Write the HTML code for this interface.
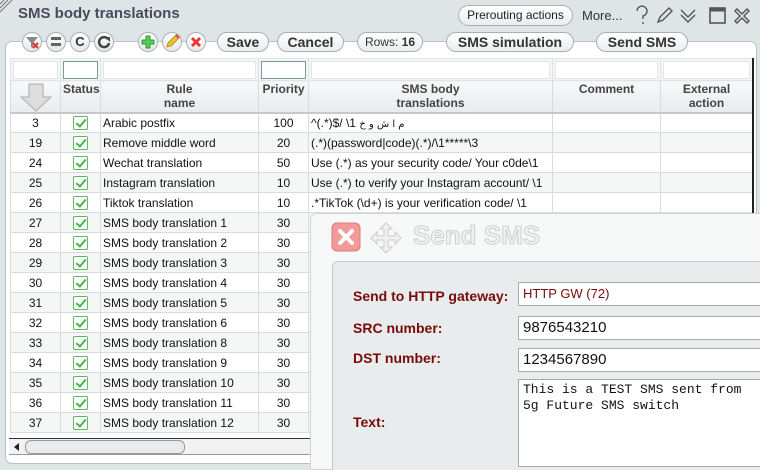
<!DOCTYPE html>
<html><head><meta charset="utf-8">
<style>
*{box-sizing:border-box;margin:0;padding:0}
html{width:760px;height:470px;overflow:hidden}
body{width:760px;height:470px;overflow:hidden;background:#dfe5e7;font-family:"Liberation Sans",Arial,sans-serif;position:relative}
.abs{position:absolute}
.title{left:18px;top:5px;font-size:15px;font-weight:bold;color:#4a4a5a}
.panel{left:5px;top:41px;width:752px;height:423px;background:#fff;border:1px solid #b8c0c4;border-radius:7px 7px 7px 7px}
.btn{position:absolute;border:1px solid #a9b0b4;border-radius:11px;background:linear-gradient(#fff,#e9eef0);font-weight:bold;color:#333;text-align:center}
.rb{position:absolute;width:20px;height:20px;border:1px solid #a9b0b4;border-radius:50%;background:linear-gradient(#fff,#e4e9eb);font-weight:bold;font-size:13px;text-align:center;line-height:18px;color:#333}
table{border-collapse:collapse;position:absolute;left:10px;top:58px;width:742px;font-size:12px;table-layout:fixed}
td{border:1px solid #d8dcdd;height:20px;padding:0 2px;white-space:nowrap;overflow:hidden;color:#111}
tr.f td{height:22px;background:#f3f5f6;border-color:#e0e4e5}
tr.h td{height:32px;background:linear-gradient(#f7f9f9,#e8ecee);font-weight:bold;color:#444;text-align:center;vertical-align:top;line-height:14px;padding-top:1px;border-bottom:2px solid #c4c9cb}
tr.r:nth-child(even) td{background:#f5f7f7}
.fi{display:block;height:18px;background:#fff;border:1px solid #e2e6e7}
.fi2{display:block;height:18px;background:#fff;border:1px solid #7a9a9a}
.c{text-align:center}
.chk{display:inline-block;width:15px;height:14px;border:1px solid #5cb85c;border-radius:2px;background:#fff;position:relative;top:2px}
.chk:after{content:"";position:absolute;left:4px;top:0;width:4px;height:8px;border:solid #4caf50;border-width:0 2px 2px 0;transform:rotate(40deg)}
.dlg{left:310px;top:213px;width:460px;height:257px;background:#f7f8f8;border:1px solid #cfd4d6;border-radius:6px 0 0 0}
.inner{left:332px;top:261px;width:440px;height:215px;background:#e8ecec;border:1px solid #c4c9cb;border-radius:6px 0 0 0}
.lab{position:absolute;color:#7a0a0a;font-weight:bold;font-size:14px}
.inp{position:absolute;background:#fff;border:1px solid #a6abad;font-size:15px;color:#111;padding-left:4px}
</style></head><body>
<svg class="abs" style="left:0;top:0" width="14" height="14"><path d="M0 12L12 0M0 8L8 0M0 4L4 0" stroke="#777" stroke-width="1"/></svg>
<div class="abs title">SMS body translations</div>
<div class="btn" style="left:458px;top:5px;width:115px;height:21px;font-size:12px;line-height:19px;font-weight:normal;color:#222">Prerouting actions</div>
<div class="abs" style="left:582px;top:8px;font-size:13px;color:#333">More...</div>
<svg class="abs" style="left:632px;top:5px" width="128" height="20" fill="none" stroke="#555" stroke-width="1.4">
<path d="M5 6a5 5 0 1 1 6 5v3M11 17v2"/>
<path d="M26 17l2-5 9-9 3 3-9 9z"/>
<path d="M49 5l7 7 7-7M49 10l7 7 7-7"/>
<rect x="78" y="3" width="15" height="15" stroke-width="1.6"/><path d="M78 5h15" stroke-width="3"/>
<path d="M105 4l5 5 5-5 2 2-5 5 5 5-2 2-5-5-5 5-2-2 5-5-5-5z"/>
</svg>
<div class="abs panel"></div>
<div class="rb" style="left:22px;top:32px"><svg width="18" height="18"><path d="M3 4h12l-5 6v5l-2-1v-4z" fill="#888"/><path d="M10 10l5 5M15 10l-5 5" stroke="#d33" stroke-width="2"/></svg></div>
<div class="rb" style="left:46px;top:32px"><svg width="18" height="18"><rect x="4" y="4" width="10" height="3" fill="#666"/><rect x="4" y="10" width="10" height="3" fill="#666"/></svg></div>
<div class="rb" style="left:70px;top:32px">C</div>
<div class="rb" style="left:94px;top:32px"><svg width="18" height="18"><path d="M13 6a5 5 0 1 0 1 4" fill="none" stroke="#444" stroke-width="2.5"/><path d="M10 4h5v5z" fill="#444"/></svg></div>
<div class="rb" style="left:138px;top:32px"><svg width="18" height="18"><path d="M7 3h4v4h4v4h-4v4H7v-4H3V7h4z" fill="#5c5" stroke="#393" stroke-width="1"/></svg></div>
<div class="rb" style="left:162px;top:32px"><svg width="18" height="18"><path d="M4 14l1-4 8-8 3 3-8 8z" fill="#f0c030" stroke="#a80" stroke-width=".8"/><path d="M13 2l3 3" stroke="#d44" stroke-width="2"/></svg></div>
<div class="rb" style="left:186px;top:32px"><svg width="18" height="18"><path d="M4 6l2-2 3 3 3-3 2 2-3 3 3 3-2 2-3-3-3 3-2-2 3-3z" fill="#e33"/></svg></div>
<div class="btn" style="left:217px;top:32px;width:52px;height:20px;font-size:14px;line-height:18px">Save</div>
<div class="btn" style="left:277px;top:32px;width:67px;height:20px;font-size:14px;line-height:18px">Cancel</div>
<div class="btn" style="left:357px;top:32px;width:66px;height:20px;font-size:12px;line-height:18px;font-weight:normal">Rows: <b>16</b></div>
<div class="btn" style="left:446px;top:32px;width:128px;height:20px;font-size:14px;line-height:18px">SMS simulation</div>
<div class="btn" style="left:596px;top:32px;width:92px;height:20px;font-size:14px;line-height:18px">Send SMS</div>

<table>
<colgroup><col style="width:50px"><col style="width:40px"><col style="width:158px"><col style="width:50px"><col style="width:244px"><col style="width:108px"><col style="width:92px"></colgroup>
<tr class="f"><td><span class="fi"></span></td><td><span class="fi2"></span></td><td><span class="fi"></span></td><td><span class="fi2"></span></td><td><span class="fi"></span></td><td><span class="fi"></span></td><td><span class="fi"></span></td></tr>
<tr class="h"><td style="position:relative">ID<svg style="position:absolute;left:8px;top:2px" width="36" height="30"><path d="M10 1h14v13h8L17 28 2 14h8z" fill="#ddd" stroke="#aaa"/></svg></td><td>Status</td><td>Rule<br>name</td><td>Priority</td><td>SMS body<br>translations</td><td>Comment</td><td>External<br>action</td></tr>
<tr class="r"><td class="c">3</td><td class="c"><span class="chk"></span></td><td>Arabic postfix</td><td class="c">100</td><td>^(.*)$/ \1 <span style="font-family:'DejaVu Sans',sans-serif;font-size:10px">م ا ش و خ</span></td><td></td><td></td></tr>
<tr class="r"><td class="c">19</td><td class="c"><span class="chk"></span></td><td>Remove middle word</td><td class="c">20</td><td>(.*)(password|code)(.*)/\1*****\3</td><td></td><td></td></tr>
<tr class="r"><td class="c">24</td><td class="c"><span class="chk"></span></td><td>Wechat translation</td><td class="c">50</td><td>Use (.*) as your security code/ Your c0de\1</td><td></td><td></td></tr>
<tr class="r"><td class="c">25</td><td class="c"><span class="chk"></span></td><td>Instagram translation</td><td class="c">10</td><td>Use (.*) to verify your Instagram account/ \1</td><td></td><td></td></tr>
<tr class="r"><td class="c">26</td><td class="c"><span class="chk"></span></td><td>Tiktok translation</td><td class="c">10</td><td>.*TikTok (\d+) is your verification code/ \1</td><td></td><td></td></tr>
<tr class="r"><td class="c">27</td><td class="c"><span class="chk"></span></td><td>SMS body translation 1</td><td class="c">30</td><td></td><td></td><td></td></tr>
<tr class="r"><td class="c">28</td><td class="c"><span class="chk"></span></td><td>SMS body translation 2</td><td class="c">30</td><td></td><td></td><td></td></tr>
<tr class="r"><td class="c">29</td><td class="c"><span class="chk"></span></td><td>SMS body translation 3</td><td class="c">30</td><td></td><td></td><td></td></tr>
<tr class="r"><td class="c">30</td><td class="c"><span class="chk"></span></td><td>SMS body translation 4</td><td class="c">30</td><td></td><td></td><td></td></tr>
<tr class="r"><td class="c">31</td><td class="c"><span class="chk"></span></td><td>SMS body translation 5</td><td class="c">30</td><td></td><td></td><td></td></tr>
<tr class="r"><td class="c">32</td><td class="c"><span class="chk"></span></td><td>SMS body translation 6</td><td class="c">30</td><td></td><td></td><td></td></tr>
<tr class="r"><td class="c">33</td><td class="c"><span class="chk"></span></td><td>SMS body translation 8</td><td class="c">30</td><td></td><td></td><td></td></tr>
<tr class="r"><td class="c">34</td><td class="c"><span class="chk"></span></td><td>SMS body translation 9</td><td class="c">30</td><td></td><td></td><td></td></tr>
<tr class="r"><td class="c">35</td><td class="c"><span class="chk"></span></td><td>SMS body translation 10</td><td class="c">30</td><td></td><td></td><td></td></tr>
<tr class="r"><td class="c">36</td><td class="c"><span class="chk"></span></td><td>SMS body translation 11</td><td class="c">30</td><td></td><td></td><td></td></tr>
<tr class="r"><td class="c">37</td><td class="c"><span class="chk"></span></td><td>SMS body translation 12</td><td class="c">30</td><td></td><td></td><td></td></tr>
</table>
<div class="abs" style="left:752px;top:58px;width:2px;height:160px;background:#222"></div>
<div class="abs" style="left:9px;top:438px;width:745px;height:1px;background:#333"></div>
<div class="abs" style="left:9px;top:439px;width:745px;height:16px;background:#f0f2f3;border-bottom:1px solid #999"></div>
<svg class="abs" style="left:12px;top:442px" width="10" height="10"><path d="M7 1v8L2 5z" fill="#222"/></svg>
<div class="abs" style="left:25px;top:440px;width:160px;height:14px;border:1px solid #999;border-radius:6px;background:#e8ecee"></div>

<div class="abs dlg"></div>
<svg class="abs" style="left:331px;top:222px" width="30" height="30"><rect x="1" y="1" width="28" height="28" rx="5" fill="#f29a9a" stroke="#e07878"/><path d="M9 9l12 12M21 9L9 21" stroke="#fff" stroke-width="4" stroke-linecap="round"/></svg>
<svg class="abs" style="left:370px;top:222px" width="32" height="32"><path d="M16 1l6 6h-4v7h7v-4l6 6-6 6v-4h-7v7h4l-6 6-6-6h4v-7H7v4l-6-6 6-6v4h7V7h-4z" fill="#f2f2f2" stroke="#ccc"/></svg>
<div class="abs" style="left:413px;top:220px;font-size:26px;font-weight:bold;color:#f0f2f2;-webkit-text-stroke:0.8px #c4c8c8">Send SMS</div>
<div class="abs inner"></div>
<div class="lab" style="left:353px;top:288px">Send to HTTP gateway:</div>
<div class="inp" style="left:518px;top:282px;width:250px;height:24px;font-size:13px;line-height:22px;color:#7a0a0a">HTTP GW (72)</div>
<div class="lab" style="left:353px;top:320px">SRC number:</div>
<div class="inp" style="left:518px;top:316px;width:250px;height:24px;line-height:22px">9876543210</div>
<div class="lab" style="left:353px;top:350px">DST number:</div>
<div class="inp" style="left:518px;top:348px;width:250px;height:24px;line-height:22px">1234567890</div>
<div class="lab" style="left:353px;top:414px">Text:</div>
<div class="inp" style="left:518px;top:379px;width:250px;height:88px;font-family:'Liberation Mono',monospace;font-size:13px;line-height:16px;padding-top:2px">This is a TEST SMS sent from<br>5g Future SMS switch</div>
</body></html>
